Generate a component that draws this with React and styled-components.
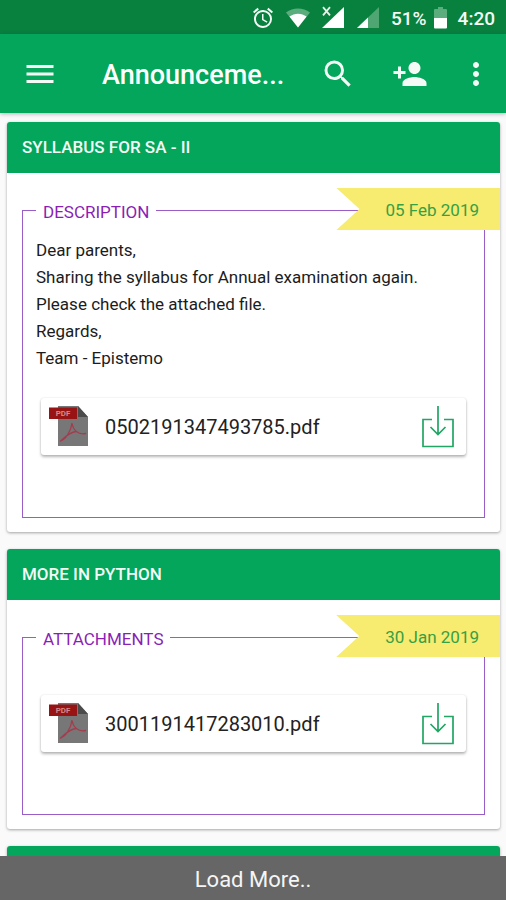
import styled, { createGlobalStyle } from "styled-components";
import {
  MdAccessAlarm,
  MdMenu,
  MdMoreVert,
  MdPersonAdd,
  MdSearch,
} from "react-icons/md";

const GlobalStyle = createGlobalStyle`
  * {
    box-sizing: border-box;
  }

  body {
    margin: 0;
    background: #fafafa;
    font-family: Roboto, "Liberation Sans", sans-serif;
  }
`;

const Screen = styled.div`
  display: flex;
  flex-direction: column;
  height: 100vh;
`;

const StatusBar = styled.div`
  display: flex;
  flex: none;
  align-items: center;
  justify-content: flex-end;
  gap: 11px;
  height: 34px;
  padding: 2px 11px 0 0;
  background: #08813e;
  color: #f4fbf6;
  font-size: 19px;
  font-weight: 500;

  svg {
    display: block;
  }
`;

const BatteryLevel = styled.span`
  display: flex;
  align-items: center;
  gap: 7px;
`;

const AppBar = styled.header`
  position: relative;
  display: flex;
  flex: none;
  align-items: center;
  height: 79px;
  padding-left: 22px;
  background: #03a65a;
  color: #fff;
  box-shadow: 0 1px 4px rgba(40, 40, 80, 0.35);
`;

const IconButton = styled.button`
  display: flex;
  flex: none;
  align-items: center;
  justify-content: center;
  width: ${({ $width }) => $width}px;
  height: 48px;
  padding: 0;
  border: none;
  background: none;
  color: #f4fbf6;
  font-size: 36px;
  cursor: pointer;
`;

const Title = styled.h1`
  flex: 1;
  min-width: 0;
  margin: 0 0 0 44px;
  padding-top: 2px;
  font-size: 27px;
  font-weight: 500;
  line-height: 36px;
  white-space: nowrap;
`;

const List = styled.main`
  display: flex;
  flex: 1;
  flex-direction: column;
  gap: 17px;
  min-height: 0;
  padding: 9px 6px 17px 7px;
  overflow-y: auto;
  scrollbar-width: none;
`;

const Card = styled.article`
  position: relative;
  flex: none;
  border-radius: 3px;
  background: #fff;
  box-shadow: 0 1px 3px rgba(0, 0, 0, 0.35);
`;

const CardTitle = styled.h2`
  min-height: 51px;
  margin: 0;
  padding: 0 15px;
  border-radius: 3px 3px 0 0;
  background: #03a65a;
  color: #f4fbf6;
  font-size: 17px;
  font-weight: 500;
  line-height: 51px;
`;

const CardBody = styled.div`
  padding: 25px 15px 14px;
`;

const Section = styled.fieldset`
  min-width: 0;
  margin: 0;
  padding: ${({ $hasText }) => ($hasText ? 15 : 20)}px 18px 62px 13px;
  border: 1px solid #9a5cc6;
`;

const SectionName = styled.legend`
  padding: 4px 7px 0;
  color: #8a1fb5;
  font-size: 17px;
  line-height: 20px;
`;

const Message = styled.p`
  margin: 0;
  color: #1c1c1c;
  font-size: 17px;
  line-height: 27px;
  white-space: pre-line;
`;

const DateRibbon = styled.time`
  position: absolute;
  top: 66px;
  right: 0;
  height: 42px;
  padding: 0 21px 0 49px;
  background: #f7eb70;
  clip-path: polygon(0 0, 100% 0, 100% 100%, 0 100%, 23px 50%);
  color: #36a045;
  font-size: 17px;
  line-height: 44px;
`;

const FileRow = styled.div`
  display: flex;
  align-items: center;
  height: 57px;
  margin: 26px 0 0 5px;
  padding: 0 8px;
  border-radius: 3px;
  background: #fff;
  box-shadow: 0 2px 3px rgba(0, 0, 0, 0.28), 0 0 2px rgba(0, 0, 0, 0.12);
`;

const FileName = styled.span`
  flex: 1;
  margin-left: 16px;
  color: #222;
  font-size: 20px;
`;

const LoadMore = styled.button`
  position: relative;
  flex: none;
  height: 44px;
  padding: 2px 0 0;
  border: none;
  background: #666;
  color: #f5f5f5;
  font-family: inherit;
  font-size: 22px;
  cursor: pointer;
`;

const WifiIcon = () => (
  <svg width="24" height="20" viewBox="0 0 24 20" aria-hidden="true">
    <path d="M0 4.5C7 -1 17 -1 24 4.5L12 19.5Z" fill="#5cad7d" />
    <path d="M3.4 8.6C8.5 4.7 15.5 4.7 20.6 8.6L12 19.5Z" fill="#fff" />
  </svg>
);

const NoSignalIcon = () => (
  <svg width="24" height="24" viewBox="0 0 24 24" aria-hidden="true">
    <path d="M23 1V22H1Z" fill="#fff" />
    <path d="M1 0H11V11H1Z" fill="#08813e" />
    <path d="M2 1.2L9 9.4M9 1.2L2 9.4" stroke="#e6f4ea" strokeWidth="1.8" />
  </svg>
);

const SignalIcon = () => (
  <svg width="24" height="24" viewBox="0 0 24 24" aria-hidden="true">
    <path d="M23 1V22H1Z" fill="#4fa673" />
    <path d="M12 11.5V22H1Z" fill="#fff" />
  </svg>
);

const BatteryIcon = () => (
  <svg width="13" height="22" viewBox="0 0 13 22" aria-hidden="true">
    <path d="M0 3Q0 2 1 2H4V0H9V2H12Q13 2 13 3V11H0Z" fill="#5cad7d" />
    <path d="M0 11H13V20.5Q13 21.5 12 21.5H1Q0 21.5 0 20.5Z" fill="#fff" />
  </svg>
);

const PdfIcon = () => (
  <svg width="40" height="41" viewBox="0 0 40 41" aria-hidden="true">
    <path d="M9 0H29L39 11V40H9Z" fill="#777" />
    <path d="M29 0L39 11H29Z" fill="#4b4b4b" />
    <path
      d="M11.5 35C16 34 22 26 23 17C24 24 29 29 36.5 27.5M11.5 35C16 31 21 26 27 25.5"
      fill="none"
      stroke="#a43c4e"
      strokeWidth="1.3"
      strokeLinecap="round"
    />
    <rect y="1.5" width="28" height="11.5" fill="#981313" />
    <text
      x="14"
      y="10"
      fill="#d08a8a"
      fontSize="8"
      fontWeight="700"
      textAnchor="middle"
    >
      PDF
    </text>
  </svg>
);

const DownloadIcon = () => (
  <svg
    width="34"
    height="42"
    viewBox="0 0 34 42"
    fill="none"
    stroke="#22a565"
    strokeWidth="1.7"
    aria-hidden="true"
  >
    <path d="M11 13.5H2V40.5H32V13.5H23" />
    <path d="M17 0V28M9.5 21L17 28.5L24.5 21" />
  </svg>
);

const announcements = [
  {
    title: "SYLLABUS FOR SA - II",
    date: "05 Feb 2019",
    section: "DESCRIPTION",
    message: [
      "Dear parents,",
      "Sharing the syllabus for Annual examination again.",
      "Please check the attached file.",
      "Regards,",
      "Team - Epistemo",
    ].join("\n"),
    file: "0502191347493785.pdf",
  },
  {
    title: "MORE IN PYTHON",
    date: "30 Jan 2019",
    section: "ATTACHMENTS",
    file: "3001191417283010.pdf",
  },
];

const Announcement = ({ title, date, section, message, file }) => (
  <Card>
    <CardTitle>{title}</CardTitle>
    <CardBody>
      <Section $hasText={Boolean(message)}>
        <SectionName>{section}</SectionName>
        {message && <Message>{message}</Message>}
        <FileRow>
          <PdfIcon />
          <FileName>{file}</FileName>
          <IconButton $width={40} aria-label="Download">
            <DownloadIcon />
          </IconButton>
        </FileRow>
      </Section>
    </CardBody>
    <DateRibbon>{date}</DateRibbon>
  </Card>
);

const App = () => (
  <Screen>
    <GlobalStyle />
    <StatusBar>
      <MdAccessAlarm size={24} />
      <WifiIcon />
      <NoSignalIcon />
      <SignalIcon />
      <BatteryLevel>
        51%
        <BatteryIcon />
      </BatteryLevel>
      <span>4:20</span>
    </StatusBar>
    <AppBar>
      <IconButton $width={36} aria-label="Menu">
        <MdMenu />
      </IconButton>
      <Title>Announceme...</Title>
      <IconButton $width={72} aria-label="Search">
        <MdSearch />
      </IconButton>
      <IconButton $width={72} aria-label="Add person">
        <MdPersonAdd />
      </IconButton>
      <IconButton $width={60} aria-label="More">
        <MdMoreVert />
      </IconButton>
    </AppBar>
    <List>
      {announcements.map((item) => (
        <Announcement key={item.file} {...item} />
      ))}
      <Card>
        <CardTitle />
      </Card>
    </List>
    <LoadMore>Load More..</LoadMore>
  </Screen>
);

export default App;
